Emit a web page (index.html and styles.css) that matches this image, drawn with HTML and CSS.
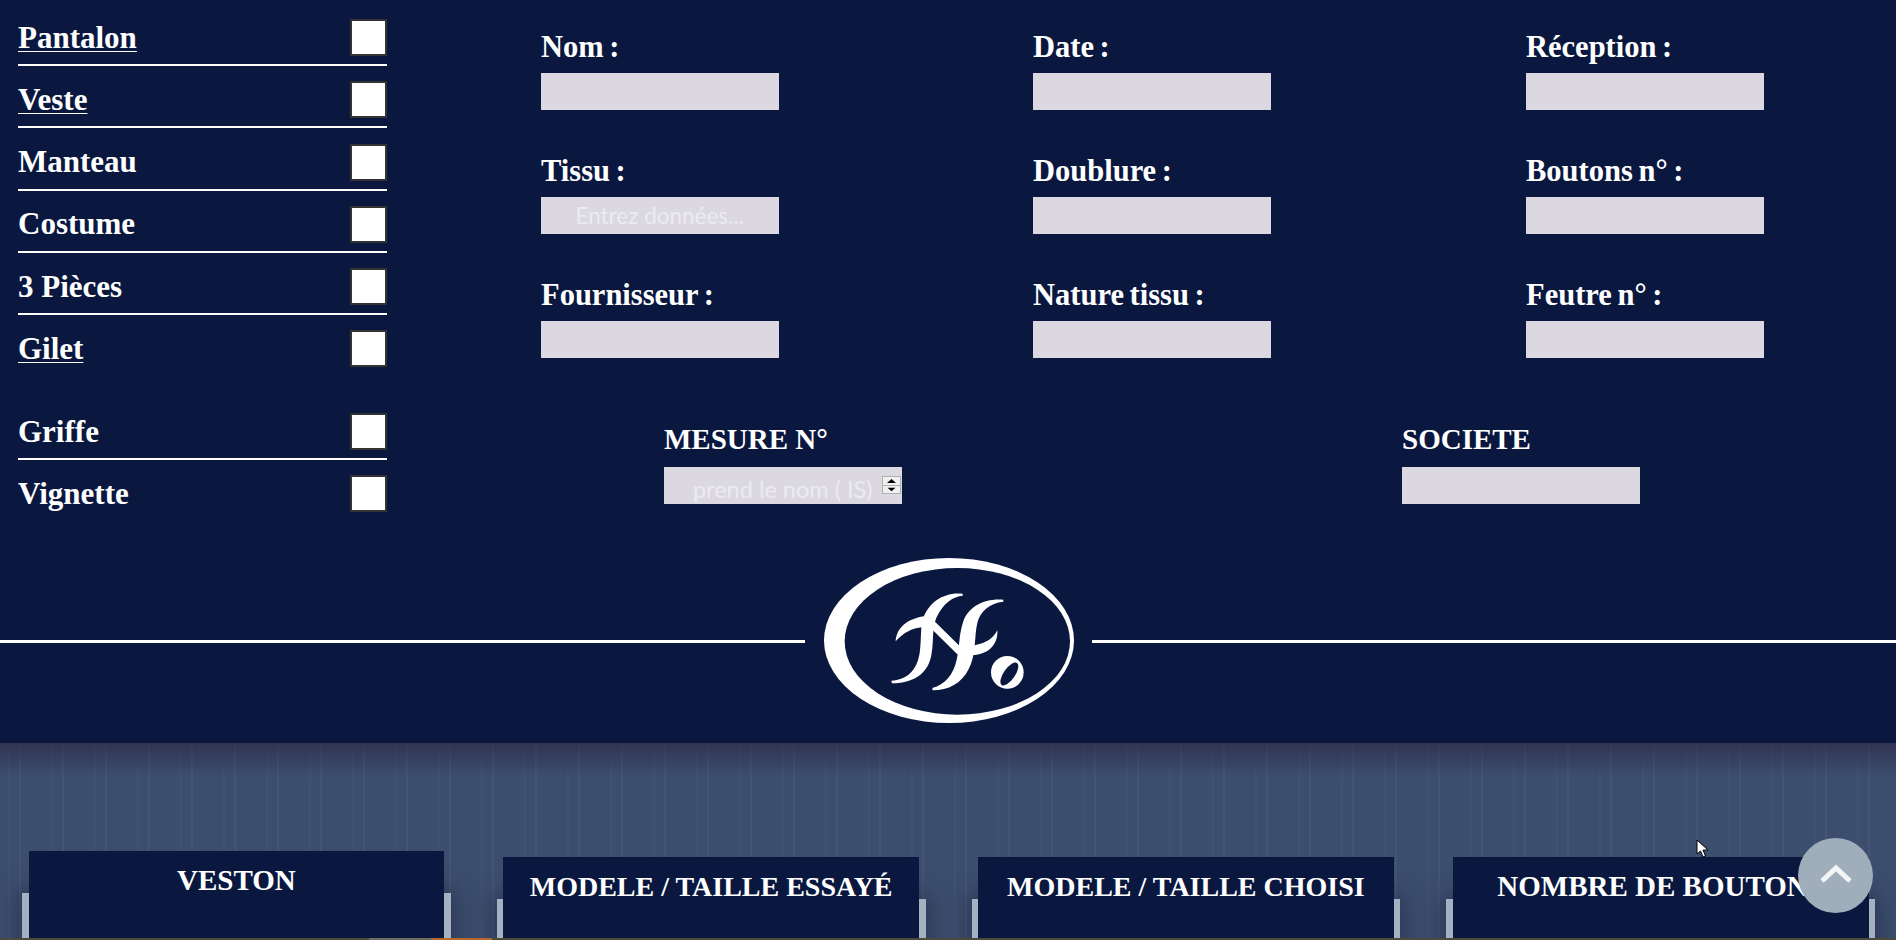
FILE: index.html
```html
<!DOCTYPE html>
<html lang="fr">
<head>
    <meta charset="UTF-8">
    <title>Fiche de mesure</title>
    <link rel="stylesheet" href="styles.css">
</head>
<body>
    <section class="topPanel">
        <div class="topRow">
            <div class="garments">
                <div class="garmentGroup">
                    <label class="garmentRow"><a href="#">Pantalon</a><input type="checkbox"></label>
                    <label class="garmentRow"><a href="#">Veste</a><input type="checkbox"></label>
                    <label class="garmentRow"><span>Manteau</span><input type="checkbox"></label>
                    <label class="garmentRow"><span>Costume</span><input type="checkbox"></label>
                    <label class="garmentRow"><span>3 Pièces</span><input type="checkbox"></label>
                    <label class="garmentRow noLine"><a href="#">Gilet</a><input type="checkbox"></label>
                </div>
                <div class="garmentGroup">
                    <label class="garmentRow"><span>Griffe</span><input type="checkbox"></label>
                    <label class="garmentRow noLine"><span>Vignette</span><input type="checkbox"></label>
                </div>
            </div>

            <form class="orderForm">
                <div class="fieldGrid">
                    <div class="field"><label>Nom :</label><input type="text"></div>
                    <div class="field"><label>Date :</label><input type="text"></div>
                    <div class="field"><label>Réception :</label><input type="text"></div>
                    <div class="field"><label>Tissu :</label><input type="text" placeholder="Entrez données..."></div>
                    <div class="field"><label>Doublure :</label><input type="text"></div>
                    <div class="field"><label>Boutons n° :</label><input type="text"></div>
                    <div class="field"><label>Fournisseur :</label><input type="text"></div>
                    <div class="field"><label>Nature tissu :</label><input type="text"></div>
                    <div class="field"><label>Feutre n° :</label><input type="text"></div>
                </div>
                <div class="mesureRow">
                    <div class="field">
                        <label>MESURE N°</label>
                        <div class="numberWrap">
                            <input class="mesureInput" type="number" placeholder="prend le nom ( IS)">
                            <div class="spin">
                                <svg width="17" height="8" viewBox="0 0 17 8"><path d="M4 6L8.5 2L13 6Z" fill="#000"/></svg>
                                <svg class="spinDown" width="17" height="8" viewBox="0 0 17 8"><path d="M4 2L8.5 6L13 2Z" fill="#000"/></svg>
                            </div>
                        </div>
                    </div>
                    <div class="field"><label>SOCIETE</label><input type="text"></div>
                </div>
            </form>
        </div>

        <div class="logoRow">
            <div class="logoLine"></div>
            <svg class="logo" viewBox="132 55 750 495" aria-label="Logo">
                <ellipse cx="507" cy="302.5" rx="375" ry="247.5" fill="#fff"/>
                <ellipse cx="532" cy="305" rx="338" ry="220" fill="#0a1840"/>
                <g fill="#fff">
                    <path d="M548 168C520 170 490 190 470 232C455 265 462 300 455 340C448 395 410 430 336 431L334 423C380 420 410 395 419 340C425 300 420 265 430 235C445 190 490 156 548 162Z"/>
                    <path d="M347 305C350 265 380 238 432 230L428 263C395 265 370 280 347 305Z"/>
                    <path d="M462 243L545 325L535 347L455 268Z"/>
                    <path d="M670 186C630 190 600 215 592 250C582 290 590 345 565 390C545 430 505 452 458 452L457 445C495 435 520 405 530 360C540 320 535 290 550 245C565 200 615 175 670 180Z"/>
                    <path d="M652 272C655 310 630 345 575 347L545 345L548 325L590 315C620 310 640 295 652 272Z"/>
                    <ellipse cx="682" cy="398" rx="49" ry="49"/>
                </g>
                <ellipse cx="688" cy="403" rx="17" ry="40" transform="rotate(35 688 403)" fill="#0a1840"/>
            </svg>
            <div class="logoLine"></div>
        </div>
    </section>

    <section class="tabs">
        <div class="tabFrame firstTab"><h2 class="tabTitle wideTitle">VESTON</h2></div>
        <div class="tabFrame"><h2 class="tabTitle">MODELE / TAILLE ESSAYÉ</h2></div>
        <div class="tabFrame"><h2 class="tabTitle">MODELE / TAILLE CHOISI</h2></div>
        <div class="tabFrame"><h2 class="tabTitle wideTitle">NOMBRE DE BOUTONS</h2></div>
    </section>

    <div class="strip">
        <span class="stripGrey"></span>
        <span class="stripOrange"></span>
    </div>

    <button class="backTop" type="button" aria-label="Haut de page">
        <svg width="36" height="22" viewBox="0 0 36 22"><path d="M4 18L18 5L32 18" fill="none" stroke="#f4f5f6" stroke-width="5"/></svg>
    </button>

    <svg class="cursor" width="13" height="19" viewBox="0 0 13 19"><path d="M1 1V15L4.5 12L7 18L9.5 17L7 11H12Z" fill="#fff" stroke="#000"/></svg>
</body>
</html>
```

FILE: styles.css
```css
* {
    box-sizing: border-box;
}

html, body {
    height: 100%;
}

body {
    position: relative;
    height: 940px;
    margin: 0;
    overflow: hidden;
    background-color: #0a1840;
    color: white;
    font-family: "Liberation Serif", serif;
}

.topPanel {
    height: 743px;
    background-color: #0a1840;
}

.topRow {
    display: flex;
    align-items: flex-start;
}

/* left list */
.garments {
    flex: none;
    width: 369px;
    margin-left: 18px;
    padding-top: 3.75px;
}

.garmentGroup + .garmentGroup {
    margin-top: 20.5px;
}

.garmentRow {
    display: flex;
    align-items: center;
    justify-content: space-between;
    height: 62.25px;
    padding: 15.25px 0 8px 0;
    border-bottom: 2px solid white;
    font-size: 31px;
    font-weight: bold;
}

.garmentRow.noLine {
    border-bottom-color: transparent;
}

.garmentRow a {
    color: white;
    text-decoration: underline;
    text-decoration-thickness: 1px;
    text-underline-offset: 3px;
}

.garmentRow input {
    appearance: none;
    flex: none;
    width: 37px;
    height: 37px;
    margin: 0;
    background-color: white;
    border: 2px solid #333;
}

/* form */
.orderForm {
    flex: none;
    margin-left: 154px;
    padding-top: 29px;
}

.fieldGrid {
    display: grid;
    grid-template-columns: 492px 493px 237.5px;
    row-gap: 43px;
}

.mesureRow {
    display: grid;
    grid-template-columns: 738px 237.5px;
    margin-top: 65px;
    padding-left: 123px;
}

.field {
    display: flex;
    flex-direction: column;
}

.field label {
    height: 34px;
    margin-bottom: 10px;
    padding-top: 1px;
    font-size: 30.5px;
    font-weight: bold;
    line-height: 34px;
    word-spacing: -2px;
}

.mesureRow .field label {
    padding-top: 0;
    font-size: 29px;
    line-height: 32px;
    word-spacing: 0;
}

.field input {
    width: 237.5px;
    height: 37px;
    padding: 0 10px;
    background-color: #dbd8e1;
    border: none;
    font-family: Lato, sans-serif;
    font-size: 22.5px;
    text-align: center;
}

.field input::placeholder {
    color: #ecebf0;
    opacity: 1;
}

.numberWrap {
    position: relative;
    width: 237.5px;
}

.field .mesureInput {
    display: block;
    padding: 7px 10px 0 10px;
    font-size: 23.5px;
    appearance: textfield;
}

.mesureInput::-webkit-inner-spin-button {
    appearance: none;
}

.spin {
    position: absolute;
    top: 9px;
    right: 1px;
    display: flex;
    flex-direction: column;
    justify-content: space-between;
    width: 19px;
    height: 18px;
    background-color: #f0f0f0;
    border: 1px solid #b0b0b0;
}

.spinDown {
    border-top: 1px solid #b0b0b0;
}

/* logo */
.logoRow {
    display: flex;
    align-items: center;
    margin-top: 35.75px;
}

.logoLine {
    flex: 1;
    height: 3px;
    margin-top: 1px;
    background-color: white;
}

.logo {
    width: 250px;
    height: 165px;
    margin: 0 18px 0 19px;
}

/* tabs */
.tabs {
    display: flex;
    align-items: flex-start;
    gap: 46px;
    height: 195px;
    padding: 156px 21px 0 22px;
    overflow: hidden;
    background-color: #3c4e6e;
    background-image:
        linear-gradient(to bottom, rgba(40, 30, 60, .55), rgba(40, 30, 60, 0) 34px),
        repeating-linear-gradient(to right, transparent 0, transparent 19px, rgba(120, 110, 150, .16) 19px, rgba(120, 110, 150, .16) 21px, transparent 21px, transparent 43px),
        repeating-linear-gradient(to right, transparent 0, transparent 8px, rgba(90, 100, 140, .12) 8px, rgba(90, 100, 140, .12) 10px, transparent 10px, transparent 43px);
}

.tabFrame {
    flex: 1;
    height: 300px;
    padding: 0 6.5px;
    background-color: #a3b1c0;
    box-shadow: 0 0 22px 4px rgba(25, 25, 50, .45);
}

.firstTab {
    margin-top: -6px;
}

.tabTitle {
    height: 200px;
    margin: -42px 0 0 0;
    background-color: #0a1840;
    font-size: 28px;
    font-weight: bold;
    line-height: 59px;
    text-align: center;
}

.tabTitle.wideTitle {
    font-size: 29px;
}

.strip {
    display: flex;
    height: 2px;
    padding-left: 369px;
    background-color: #4b4a3c;
}

.stripGrey {
    width: 62px;
    background-color: #6d6d66;
}

.stripOrange {
    width: 61px;
    background-color: #b5692f;
}

/* floating bits */
.backTop {
    position: absolute;
    right: 23px;
    bottom: 27px;
    display: flex;
    align-items: center;
    justify-content: center;
    width: 75px;
    height: 75px;
    padding: 0 0 4px 0;
    background-color: #a0aebc;
    border: none;
    border-radius: 50%;
}

.cursor {
    position: absolute;
    left: 1696px;
    top: 839px;
}
```
